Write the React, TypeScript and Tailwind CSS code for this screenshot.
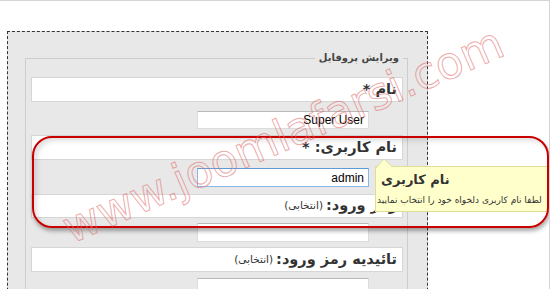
import React from "react";

const FA = { fontFamily: '"DejaVu Sans", Tahoma, sans-serif' };
const EN = { fontFamily: '"Liberation Sans", Arial, sans-serif' };

function LabelBox({ children, className }: { children: React.ReactNode; className: string }) {
  return (
    <div
      className={`bg-white border border-[#d6d6d6] flex items-center pr-[5px] text-[#333] ${className}`}
      style={FA}
    >
      {children}
    </div>
  );
}

function InputBox({ children, className }: { children?: React.ReactNode; className: string }) {
  return (
    <div
      className={`mr-[34px] w-[172px] bg-white border flex items-center pr-[4px] text-[12px] text-black ${className}`}
      style={EN}
    >
      {children}
    </div>
  );
}

export default function App() {
  return (
    <div className="relative w-[550px] h-[289px] overflow-hidden bg-white border-t border-r border-[#d4d4d4]">
      <div className="ml-[7px] mt-[30px] w-[421px] h-[300px] border border-dashed border-[#333] bg-[#e8e8e8] pt-[19px] pl-[17px] pr-[19px]">
        <fieldset dir="rtl" className="border border-[#cdcdcd] h-[280px] pl-[5px] pr-[4px]">
          <legend
            className="mr-[0px] px-[4px] text-[10px] leading-[14px] font-bold text-[#444]"
            style={FA}
          >
            ویرایش پروفایل
          </legend>
          <LabelBox className="mt-[12px] h-[25px]">
            <span className="text-[14.5px] font-bold">نام *</span>
          </LabelBox>
          <InputBox className="mt-[9px] h-[18px] border-[#dcdcdc] border-t-[#b9b9b9]">
            <span dir="ltr">Super User</span>
          </InputBox>
          <LabelBox className="mt-[6px] h-[25px]">
            <span className="text-[14.5px] font-bold">نام کاربری: *</span>
          </LabelBox>
          <InputBox className="mt-[8px] h-[19px] border-[#8ab8e6] border-t-[#5e9bd6]">
            <span dir="ltr">admin</span>
          </InputBox>
          <LabelBox className="mt-[7px] h-[24px]">
            <span className="text-[14.5px] font-bold">رمز ورود:</span>
            <span className="text-[10.5px] mr-[3px]">(انتخابی)</span>
          </LabelBox>
          <InputBox className="mt-[5px] h-[19px] border-[#dcdcdc] border-t-[#b9b9b9]" />
          <LabelBox className="mt-[5px] h-[25px]">
            <span className="text-[14.5px] font-bold">تائیدیه رمز ورود:</span>
            <span className="text-[10.5px] mr-[3px]">(انتخابی)</span>
          </LabelBox>
          <InputBox className="mt-[6px] h-[19px] border-[#dcdcdc] border-t-[#b9b9b9]" />
        </fieldset>
      </div>

      {/* tooltip */}
      <div className="absolute left-[375px] top-[165px] w-[200px] h-[46px] bg-[#ffffcc] border border-[#dede9a]">
        <svg className="absolute left-[0px] top-[-9px]" width="20" height="10" viewBox="0 0 20 10">
          <polygon points="0.5,9.5 8,1 17,9.5" fill="#ffffcc" stroke="#dede9a" strokeWidth="1" />
          <rect x="1" y="9" width="16" height="2" fill="#ffffcc" />
        </svg>
        <div
          dir="rtl"
          className="absolute left-[5px] top-[4px] text-[13px] leading-[18px] font-bold text-[#333] whitespace-nowrap"
          style={FA}
        >
          نام کاربری
        </div>
        <div
          dir="rtl"
          className="absolute left-[1px] top-[26px] text-[9px] leading-[14px] text-[#333] whitespace-nowrap"
          style={FA}
        >
          لطفا نام کاربری دلخواه خود را انتخاب نمایید
        </div>
      </div>

      {/* red highlight frame */}
      <div className="absolute left-[32px] top-[135px] w-[517px] h-[92px] rounded-[20px] border-2 border-[#c80000] shadow-[1px_3px_4px_rgba(0,0,0,0.35),inset_3px_3px_5px_rgba(0,0,0,0.12)]" />

      {/* watermark */}
      <svg className="absolute left-0 top-0 pointer-events-none" width="550" height="289" viewBox="0 0 550 289">
        <text
          x="283"
          y="134"
          textAnchor="middle"
          dominantBaseline="central"
          transform="rotate(-23.5 283 134)"
          fontFamily="DejaVu Sans, Verdana, sans-serif"
          fontSize="44.5"
          fill="none"
          stroke="#e07070"
          strokeOpacity="0.6"
          strokeWidth="1"
        >
          www.joomlafarsi.com
        </text>
      </svg>
    </div>
  );
}
